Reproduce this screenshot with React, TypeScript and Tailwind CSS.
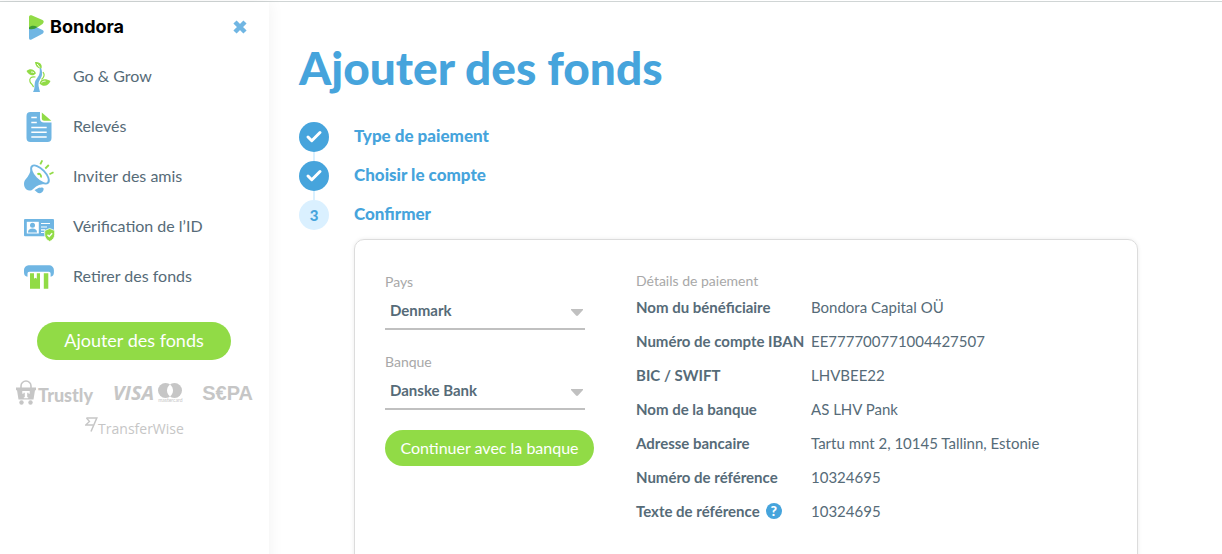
import { Check } from "lucide-react";
import type { ReactNode } from "react";

const BLUE = "#70b6e3";
const GREEN = "#91db46";

function Icon({ children }: { children: ReactNode }) {
  return (
    <svg viewBox="0 0 32 32" className="size-8 shrink-0 overflow-visible" fill="none" aria-hidden="true">
      {children}
    </svg>
  );
}

function GrowIcon() {
  return (
    <Icon>
      <path d="M10 31c3-5 .2-9 3.500-13 2.500-3.500 4-5.500 3-11.500l1-.8c2.500 6 2 9-.5 12.800-2.500 4-1.300 7 0 12.500z" fill={BLUE} />
      <path d="M12 1c4 0 7.500 1.500 6.600 6.200C15 7.800 12.600 5.500 12 1zM3.500 10c3-2.500 7.500-2.500 9.500 2.300-2.500 3.200-6.500 2.700-9.500-2.300zM16.500 22.500c1-5 6-5.500 11-2.500-2 5-7 6.500-11 2.500z" fill={GREEN} />
      <path d="M14.200 3l2.600 3.500M18.500 21.700c1-1.300 2.500-1.600 4-1.500M8 11.200c1-.4 2-.2 3 .6" stroke="#fff" strokeWidth="1" />
      <path d="M12.500 16c-4.500-.8-6.500 1.700-5.500 4.700.8 2.300 3 3 3.500 5.500M20 11c2 2.500 1.200 5.500-1.500 7.500" stroke={GREEN} strokeWidth="1.200" />
    </Icon>
  );
}

function StatementIcon() {
  return (
    <Icon>
      <path d="M7.500 1H17v6.500c0 2.500 1.500 4 4 4h7.500V27a4 4 0 0 1-4 4h-17a4 4 0 0 1-4-4V5a4 4 0 0 1 4-4z" fill={BLUE} />
      <path d="M18.800 1.500l9.500 8.300h-7a2.500 2.500 0 0 1-2.500-2.500z" fill={GREEN} />
      <path d="M8.300 6.500h5.500M8.300 11.500h5.500M8.300 16.500h15.400M8.300 21.300h15.400M8.300 26h15.400" stroke="#fff" strokeWidth="1.500" />
    </Icon>
  );
}

function InviteIcon() {
  return (
    <Icon>
      <path d="M8 6c-.5 6-2.500 9-5.500 12.500C.3 21 .5 26 3.500 28.500c2 1.600 5 1.500 7-.8 3.500-3.700 8.500-5 14-4.700z" fill={BLUE} />
      <ellipse cx="17" cy="13.500" rx="11.500" ry="5.300" transform="rotate(46 17 13.500)" fill="#fff" stroke={BLUE} strokeWidth="1.900" />
      <path d="M11.500 29c1.500 0 3.500-2.500 5-2.500 1 .8 3-.8 4 .7.600 1.800-1 4.500-3.500 5-2.300.3-4-1.800-5.500-3.200z" fill={BLUE} />
      <path d="M14.500 13.500c2-1.800 4 .5 3.500 3" stroke={GREEN} strokeWidth="1.800" />
      <path d="M17.300 3.300l2-4M22.300 7.500l3.500-3.500M26.500 13.300l4-2" stroke={GREEN} strokeWidth="1.800" />
    </Icon>
  );
}

function IdIcon() {
  return (
    <Icon>
      <rect x="1" y="8" width="30" height="17.300" rx="1" fill={BLUE} />
      <path d="M3.800 10.800h12v11.700h-12z" fill="#fff" />
      <circle cx="9.500" cy="14.300" r="2.500" fill={BLUE} />
      <path d="M5 21.500c0-3 2-4 4.500-4s4.500 1 4.500 4z" fill={BLUE} />
      <path d="M18 12.500h9M18 16h6M18 18.800h4M18 21.500h3" stroke="#fff" strokeWidth="1.200" />
      <path d="M26.700 17.500l5 2v4.300c0 3-2 5.200-5 6.700-3-1.500-5-3.700-5-6.700v-4.300z" fill={GREEN} stroke="#fff" strokeWidth=".8" />
      <path d="M24.500 23.800l1.700 1.700 3-3.200" stroke="#fff" strokeWidth="1.400" />
    </Icon>
  );
}

function WithdrawIcon() {
  return (
    <Icon>
      <path d="M5.500 4.300h20.700a4.700 4.700 0 0 1 4.700 4.700v2.500c0 2.500-1.200 4-3.300 4.300v-3.300a1.800 1.800 0 0 0-1.800-1.800H6.300a1.800 1.800 0 0 0-1.800 1.800v3.300C2.300 15.500 1 14 1 11.500V9a4.700 4.700 0 0 1 4.500-4.700z" fill={BLUE} />
      <path d="M7 12.300h4v5.500l1.400-1 1.400 1v-5.500H17v15.400H7zM20.800 12.300h4.500v15.400h-4.500z" fill={GREEN} />
    </Icon>
  );
}

const menu = [
  { label: "Go & Grow", icon: <GrowIcon /> },
  { label: "Relevés", icon: <StatementIcon /> },
  { label: "Inviter des amis", icon: <InviteIcon /> },
  { label: "Vérification de l’ID", icon: <IdIcon /> },
  { label: "Retirer des fonds", icon: <WithdrawIcon /> },
];

const details = [
  ["Nom du bénéficiaire", "Bondora Capital OÜ"],
  ["Numéro de compte IBAN", "EE777700771004427507"],
  ["BIC / SWIFT", "LHVBEE22"],
  ["Nom de la banque", "AS LHV Pank"],
  ["Adresse bancaire", "Tartu mnt 2, 10145 Tallinn, Estonie"],
  ["Numéro de référence", "10324695"],
  ["Texte de référence", "10324695"],
];

function PaymentLogos() {
  return (
    <div className="mt-5 text-[#c6c6c6]">
      <div className="flex items-center justify-between px-4">
        <div className="flex items-center gap-[2px]">
          <svg viewBox="0 0 20 25" className="h-[25px] w-5" aria-hidden="true">
            <path d="M5 9V6a5 5 0 0 1 10 0v3" fill="none" stroke="currentColor" strokeWidth="1.600" />
            <path d="M0 7.500h20v2.700h-1l-1.500 9.300h-15L1 10.200H0z" fill="currentColor" />
            <path d="M6.300 11h7.400v2.700h-1.200v-1h-1.300v4.500h1v1H7.800v-1h1v-4.500H7.500v1H6.300z" fill="#fff" />
            <circle cx="5.500" cy="22.500" r="2.200" fill="currentColor" />
            <circle cx="14.500" cy="22.500" r="2.200" fill="currentColor" />
          </svg>
          <span className="pt-1 font-['Lato'] text-lg leading-5 font-black">Trustly</span>
        </div>
        <div className="flex items-center gap-1">
          <span className="font-['Open_Sans'] text-xl leading-6 font-bold italic">VISA</span>
          <div className="flex flex-col items-center">
            <svg viewBox="0 0 24 15" className="h-[15px] w-6" aria-hidden="true">
              <circle cx="7.500" cy="7.500" r="7.500" fill="currentColor" />
              <circle cx="16.500" cy="7.500" r="7.500" fill="currentColor" />
              <path d="M12 1.500a7.500 7.500 0 0 1 0 12 7.500 7.500 0 0 1 0-12z" fill="#fff" />
            </svg>
            <span className="text-[5px] leading-[5px]">mastercard</span>
          </div>
        </div>
        <span className="font-['Liberation_Sans'] text-xl leading-6 font-bold">S€PA</span>
      </div>
      <div className="mt-3 flex justify-center">
        <svg viewBox="0 0 13 15" className="h-[15px] w-[13px]" fill="none" stroke="currentColor" aria-hidden="true">
          <path d="M1.500 1h10.300L6 14.500" strokeWidth="1.500" />
          <path d="M1.500 1l3 3.500L.7 8h7.800" strokeWidth="1.300" />
        </svg>
        <span className="pt-[2px] font-['Open_Sans'] text-sm leading-5">TransferWise</span>
      </div>
    </div>
  );
}

function Sidebar() {
  return (
    <aside className="w-[269px] shrink-0 bg-white shadow-[0_0_16px_rgba(0,0,0,0.06)]">
      <header className="flex h-[50px] items-center justify-between pr-[22px] pl-[29px]">
        <a href="#" className="flex items-center gap-[6px] text-black">
          <svg viewBox="0 0 15 25" className="h-[25px] w-[15px]" aria-hidden="true">
            <path d="M2.500.2l11 4.800c1.600.8 1.600 2.700 0 4L6 14H0V2C0 .6 1 0 2.500.2z" fill="#91db46" />
            <path d="M0 14l5-3 8.500 4c1.600.9 1.600 2.800 0 3.800l-11 5.800C1 25.200 0 24.500 0 23z" fill="#70b6e3" />
            <path d="M0 12.500C2 10.500 5 10 8.300 12 6 14 4 14.500 0 14z" fill="#3d9c35" />
          </svg>
          <span className="font-['Inter'] text-lg leading-6 font-bold">Bondora</span>
        </a>
        <button type="button" aria-label="Fermer" className="text-[#70b6e3]">
          <svg viewBox="0 0 14 14" className="size-[14px]" stroke="currentColor" strokeWidth="4.500" aria-hidden="true">
            <path d="M2 2l10 10M12 2L2 12" />
          </svg>
        </button>
      </header>
      <nav>
        {menu.map((item) => (
          <a key={item.label} href="#" className="flex h-[50px] items-center gap-[18px] pl-[23px] text-base">
            {item.icon}
            <span className="pb-[2px]">{item.label}</span>
          </a>
        ))}
      </nav>
      <div className="px-[37px] pt-5 pr-[38px]">
        <button type="button" className="h-[38px] w-full rounded-full bg-[#91db46] pb-[2px] text-lg text-white">
          Ajouter des fonds
        </button>
      </div>
      <PaymentLogos />
    </aside>
  );
}

type StepProps = {
  label: string;
  done?: boolean;
};

function Step({ label, done }: StepProps) {
  return (
    <li className="flex gap-[25px]">
      <div className="flex w-[30px] flex-col items-center">
        {done ? (
          <span className="flex size-[30px] items-center justify-center rounded-full bg-[#46a4dc] text-white">
            <Check className="size-[18px]" strokeWidth={4} />
          </span>
        ) : (
          <span className="flex size-[30px] items-center justify-center rounded-full bg-[#daf0ff] text-[15px] font-black">
            3
          </span>
        )}
        {done && <span className="h-[9px] w-[2px] bg-[#daf0ff]" />}
      </div>
      <span className="text-[17px] leading-7 font-black">{label}</span>
    </li>
  );
}

type SelectFieldProps = {
  id: string;
  label: string;
  value: string;
};

function SelectField({ id, label, value }: SelectFieldProps) {
  return (
    <div className="h-20">
      <label htmlFor={id} className="block text-sm leading-5 text-[#a8a8a8]">
        {label}
      </label>
      <div className="relative w-[200px]">
        <select
          id={id}
          className="h-[38px] w-full appearance-none border-b-2 border-[#c0c0c0] bg-transparent pl-[5px] text-[15px] font-bold"
        >
          <option>{value}</option>
        </select>
        <svg viewBox="0 0 12 7" className="pointer-events-none absolute top-[17px] right-[2px] h-[7px] w-3" aria-hidden="true">
          <path d="M0 0h12v1L7 6.500a1.500 1.500 0 0 1-2 0L0 1z" fill="#c0c0c0" />
        </svg>
      </div>
    </div>
  );
}

function PaymentCard() {
  return (
    <section className="mt-[9px] ml-[55px] flex gap-[42px] rounded-[10px] border border-[#dcdcdc] px-[30px] pt-8 pb-16 shadow-[0_0_4px_rgba(0,0,0,0.08)]">
      <form className="w-[209px] shrink-0">
        <SelectField id="country" label="Pays" value="Denmark" />
        <SelectField id="bank" label="Banque" value="Danske Bank" />
        <button
          type="button"
          className="-mt-[2px] h-9 w-full rounded-full bg-[#91db46] text-base whitespace-nowrap text-white"
        >
          Continuer avec la banque
        </button>
      </form>
      <div className="min-w-0 flex-1">
        <h2 className="text-sm leading-[18px] text-[#a8a8a8]">Détails de paiement</h2>
        <dl>
          {details.map(([name, value]) => (
            <div key={name} className="flex h-[34px] items-center text-[15px]">
              <dt className="flex w-[175px] shrink-0 items-center gap-[6px] font-bold whitespace-nowrap">
                {name}
                {name === "Texte de référence" && (
                  <button
                    type="button"
                    aria-label="Aide"
                    className="size-4 rounded-full bg-[#46a4dc] text-sm leading-4 font-black text-white"
                  >
                    ?
                  </button>
                )}
              </dt>
              <dd>{value}</dd>
            </div>
          ))}
        </dl>
      </div>
    </section>
  );
}

export default function App() {
  return (
    <div className="bg-white pt-px font-['Lato',sans-serif] text-[#566b78]">
      <div className="flex min-h-screen border-t border-[#d0d5d5]">
        <Sidebar />
        <main className="min-w-0 flex-1 pt-9 pr-[84px] pl-[30px] text-[#46a4dc]">
          <h1 className="text-[46px] leading-[60px] font-black">Ajouter des fonds</h1>
          <ol className="mt-6">
            <Step label="Type de paiement" done />
            <Step label="Choisir le compte" done />
            <Step label="Confirmer" />
          </ol>
          <div className="text-[#566b78]">
            <PaymentCard />
          </div>
        </main>
      </div>
    </div>
  );
}
